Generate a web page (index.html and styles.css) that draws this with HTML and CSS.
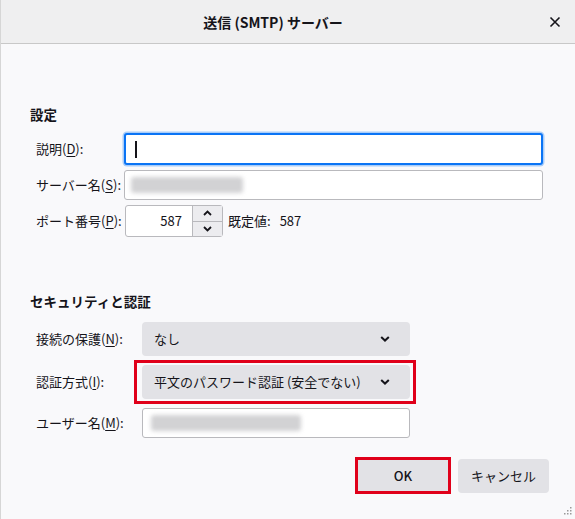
FILE: index.html
```html
<!DOCTYPE html>
<html lang="ja">
<head>
<meta charset="utf-8">
<title>送信 (SMTP) サーバー</title>
<link rel="stylesheet" href="styles.css">
</head>
<body>
<div class="window">
  <header class="titlebar">
    <span class="title">送信 (SMTP) サーバー</span>
    <span class="close" aria-label="閉じる">
      <svg width="12" height="12" viewBox="0 0 12 12"><path d="M1.5 1.5 L10.5 10.5 M10.5 1.5 L1.5 10.5" stroke="#15141a" stroke-width="1.6" fill="none"/></svg>
    </span>
  </header>

  <main class="content">
    <section class="group group-settings">
      <h2 class="heading">設定</h2>
      <div class="form form-settings">
        <label class="label">説明(<u>D</u>):</label>
        <div class="field text-input focused"><span class="caret"></span></div>

        <label class="label">サーバー名(<u>S</u>):</label>
        <div class="field text-input"><span class="blurred blurred-server"></span></div>

        <label class="label">ポート番号(<u>P</u>):</label>
        <div class="port-row">
          <div class="number-input">
            <span class="number-value">587</span>
            <div class="spinner">
              <span class="spin-btn">
                <svg width="9" height="6" viewBox="0 0 9 6"><path d="M1 5 L4.5 1.5 L8 5" stroke="#15141a" stroke-width="1.8" fill="none"/></svg>
              </span>
              <span class="spin-btn">
                <svg width="9" height="6" viewBox="0 0 9 6"><path d="M1 1 L4.5 4.5 L8 1" stroke="#15141a" stroke-width="1.8" fill="none"/></svg>
              </span>
            </div>
          </div>
          <span class="default-value">既定値:<span class="default-num">587</span></span>
        </div>
      </div>
    </section>

    <section class="group group-security">
      <h2 class="heading">セキュリティと認証</h2>
      <div class="form form-security">
        <label class="label">接続の保護(<u>N</u>):</label>
        <div class="select">
          <span class="select-text">なし</span>
          <svg class="chev" width="10" height="6" viewBox="0 0 10 6"><path d="M1.2 1 L5 4.6 L8.8 1" stroke="#15141a" stroke-width="2" fill="none"/></svg>
        </div>

        <label class="label">認証方式(<u>I</u>):</label>
        <div class="highlight-wrap">
          <div class="select">
            <span class="select-text">平文のパスワード認証 (安全でない)</span>
            <svg class="chev" width="10" height="6" viewBox="0 0 10 6"><path d="M1.2 1 L5 4.6 L8.8 1" stroke="#15141a" stroke-width="2" fill="none"/></svg>
          </div>
          <span class="highlight"></span>
        </div>

        <label class="label">ユーザー名(<u>M</u>):</label>
        <div class="field text-input user-input"><span class="blurred blurred-user"></span></div>
      </div>
    </section>

    <div class="buttons">
      <button class="btn btn-ok">OK</button>
      <button class="btn btn-cancel">キャンセル</button>
    </div>
  </main>

  <svg class="grip" width="8" height="8" viewBox="0 0 8 8">
    <rect x="6" y="0" width="1.5" height="1.5" fill="#9a9a9a"/>
    <rect x="3" y="3" width="1.5" height="1.5" fill="#9a9a9a"/>
    <rect x="6" y="3" width="1.5" height="1.5" fill="#9a9a9a"/>
    <rect x="0" y="6" width="1.5" height="1.5" fill="#9a9a9a"/>
    <rect x="3" y="6" width="1.5" height="1.5" fill="#9a9a9a"/>
    <rect x="6" y="6" width="1.5" height="1.5" fill="#9a9a9a"/>
  </svg>
</div>
</body>
</html>
```

FILE: styles.css
```css
* { box-sizing: border-box; }

html, body {
  margin: 0;
  padding: 0;
}

body {
  width: 575px;
  height: 519px;
  overflow: hidden;
  font-family: "Noto Sans CJK JP", "Noto Sans", sans-serif;
  font-size: 13px;
  color: #15141a;
  background: #f9f9fb;
}

.window {
  position: relative;
  width: 575px;
  height: 519px;
  background: #f9f9fb;
  border-left: 1px solid #d6d6d6;
  display: flex;
  flex-direction: column;
}

.titlebar {
  height: 44px;
  flex: none;
  display: flex;
  align-items: center;
  background: #efeff0;
  border-bottom: 1px solid #c8c8c8;
}

.title {
  flex: 1;
  text-align: center;
  font-size: 14px;
  font-weight: 700;
  padding-left: 4px;
  line-height: 20px;
}

.close {
  width: 28px;
  height: 28px;
  margin-right: 6px;
  display: flex;
  align-items: center;
  justify-content: center;
}

.content {
  flex: 1;
  display: flex;
  flex-direction: column;
  padding-left: 29px;
  padding-right: 26px;
}

.heading {
  margin: 0;
  font-size: 13.5px;
  font-weight: 700;
  line-height: 18px;
  height: 18px;
}

.group-settings { margin-top: 61px; }
.group-security { margin-top: 55px; }

.form {
  display: grid;
  align-items: center;
  margin-left: 6px;
}

.form-settings {
  margin-top: 10px;
  grid-template-columns: 88px 419px;
  grid-template-rows: 32px 30px 32px;
  row-gap: 5px;
}

.form-security {
  margin-top: 12px;
  grid-template-columns: 106px 268px;
  grid-template-rows: 34px 34px 30px;
  row-gap: 9px;
}

.label {
  white-space: nowrap;
  line-height: 18px;
}

.label u {
  text-decoration-thickness: 1px;
  text-underline-offset: 2px;
}

.text-input {
  height: 100%;
  background: #ffffff;
  border: 1px solid #b9b9bd;
  border-radius: 3px;
  display: flex;
  align-items: center;
  padding-left: 6px;
}

.text-input.focused {
  border: 2px solid #0a74f5;
  box-shadow: 0 0 0 1.5px #a9cdf9;
  padding-left: 9px;
}

.caret {
  display: block;
  width: 1.5px;
  height: 17px;
  background: #15141a;
}

.blurred {
  display: block;
  height: 16px;
  background: #d2d2d4;
  border-radius: 3px;
  filter: blur(2px);
}

.blurred-server { width: 112px; }
.blurred-user { width: 150px; }

.port-row {
  display: flex;
  align-items: center;
  height: 100%;
}

.number-input {
  width: 98px;
  height: 100%;
  display: flex;
  background: #ffffff;
  border: 1px solid #b9b9bd;
  border-radius: 3px;
  margin-left: 1px;
}

.number-value {
  flex: 1;
  text-align: right;
  padding-right: 10px;
  line-height: 30px;
}

.spinner {
  width: 30px;
  display: flex;
  flex-direction: column;
  border-left: 1px solid #b9b9bd;
}

.spin-btn {
  flex: 1;
  display: flex;
  align-items: center;
  justify-content: center;
  background: #ececef;
}

.spin-btn + .spin-btn {
  border-top: 1px solid #b9b9bd;
}

.default-value {
  margin-left: 5px;
  line-height: 18px;
}

.default-num {
  margin-left: 9px;
}

.select {
  height: 34px;
  background: #e2e2e6;
  border-radius: 4px;
  display: flex;
  align-items: center;
  justify-content: space-between;
  padding-left: 12px;
  padding-right: 20px;
}

.select-text {
  line-height: 18px;
  white-space: nowrap;
}

.chev {
  display: block;
}

.highlight-wrap {
  position: relative;
}

.highlight {
  position: absolute;
  left: -8px;
  right: -6px;
  top: -5px;
  bottom: -5px;
  border: 3px solid #e0001a;
  pointer-events: none;
}

.user-input {
  padding-left: 8px;
}

.buttons {
  display: flex;
  justify-content: flex-end;
  align-items: center;
  gap: 7px;
  margin-top: 19px;
}

.btn {
  font-family: inherit;
  font-size: 13px;
  color: #15141a;
  background: #e2e2e6;
  border: none;
  border-radius: 4px;
  padding: 0;
  line-height: 18px;
}

.btn-ok {
  width: 96px;
  height: 37px;
  border: 3px solid #e0001a;
  border-radius: 0;
  font-weight: 500;
}

.btn-cancel {
  width: 91px;
  height: 34px;
}

.grip {
  position: absolute;
  right: 3px;
  bottom: 4px;
}
```
